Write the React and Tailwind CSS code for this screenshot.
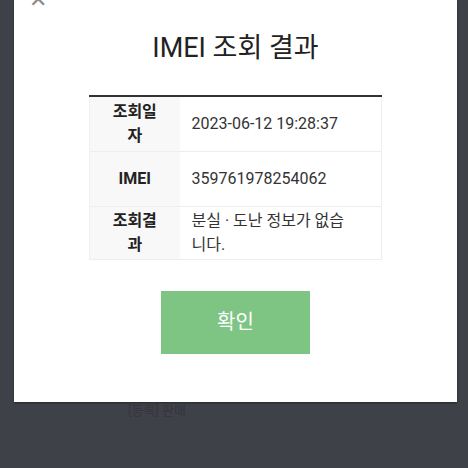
export default function App() {
  const rows = [
    { label: '조회일자', value: '2023-06-12 19:28:37', h: 'h-[55px]' },
    { label: 'IMEI', value: '359761978254062', h: 'h-[55px]' },
    { label: '조회결과', value: '분실 · 도난 정보가 없습니다.', h: 'h-[53px]' },
  ];

  return (
    <div
      className="h-[468px] w-[468px] overflow-hidden bg-[#3f4148] pl-[14px] pr-[11px]"
      style={{ fontFamily: 'Roboto, "Noto Sans CJK KR", "Noto Sans", sans-serif' }}
    >
      <div className="relative flex h-[402px] flex-col items-center overflow-hidden bg-white shadow-[0_1px_2px_rgba(0,0,0,0.4)]">
        <span className="absolute left-[15px] top-[-11px] text-[22px] leading-none text-[#8a8a8a]">✕</span>

        <h1 className="mt-[29px] text-[27px] leading-[38px] text-[#222]">IMEI 조회 결과</h1>

        <table className="mt-[28px] w-[293px] border-collapse border-t-[2px] border-t-[#333] text-[16px] text-[#333]">
          <tbody>
            {rows.map((r) => (
              <tr key={r.label} className={`${r.h} border-b border-[#eeeeee]`}>
                <th className="w-[90px] border-l border-[#f0f0f0] bg-[#f8f8f8] px-[18px] text-center align-middle text-[16px] font-bold leading-[24px] text-[#222]">
                  {r.label}
                </th>
                <td className="border-r border-[#eeeeee] pl-[12px] pr-[28px] align-middle leading-[24px]">{r.value}</td>
              </tr>
            ))}
          </tbody>
        </table>

        <button className="mt-[31px] h-[63px] w-[149px] bg-[#7ec584] text-[20px] text-white">확인</button>
      </div>
      <div className="ml-[114px] mt-[1px] text-[13px] leading-[16px] text-[#34363c]">[등록] 판매</div>
    </div>
  );
}
